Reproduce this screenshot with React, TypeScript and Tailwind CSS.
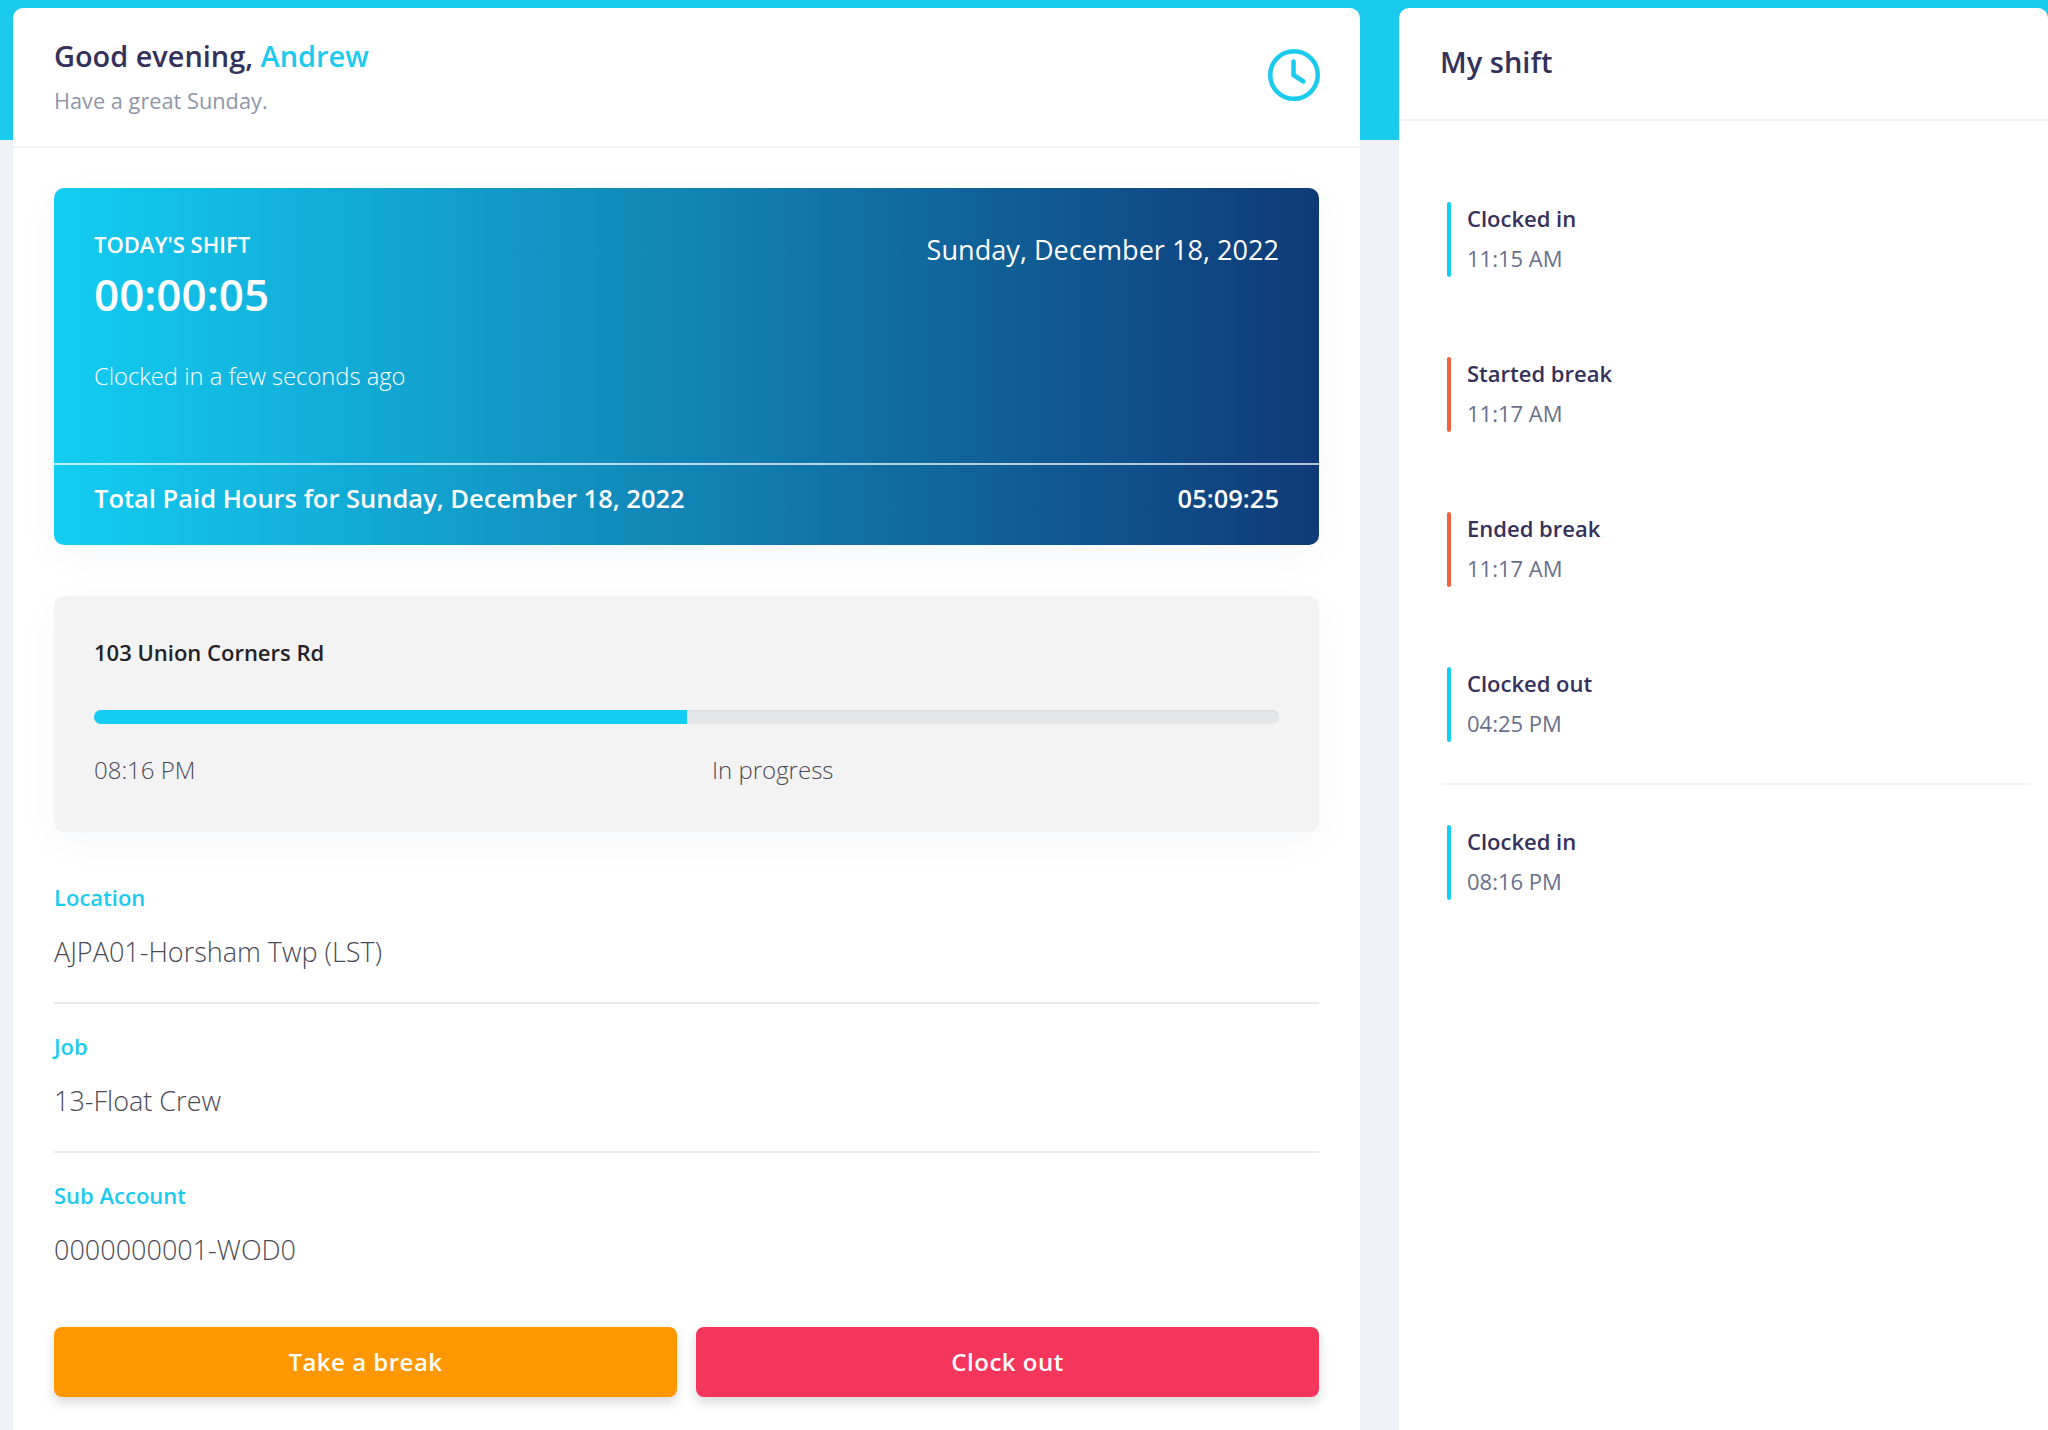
const shifts = [
  { label: "Clocked in", time: "11:15 AM", color: "bg-[#13cdf2]" },
  { label: "Started break", time: "11:17 AM", color: "bg-[#f4603c]" },
  { label: "Ended break", time: "11:17 AM", color: "bg-[#f4603c]" },
  { label: "Clocked out", time: "04:25 PM", color: "bg-[#13cdf2]" },
];

function ShiftItem({ label, time, color }: { label: string; time: string; color: string }) {
  return (
    <div className="flex h-[75px] gap-[16px] pl-[5px]">
      <div className={`w-[4px] rounded-full ${color}`} />
      <div className="flex flex-col pt-[0.5px]">
        <div className="text-[22px] leading-[30px] font-semibold text-[#34315c]">{label}</div>
        <div className="mt-[10px] text-[22px] leading-[30px] font-normal text-[#69708c]">{time}</div>
      </div>
    </div>
  );
}

function Field({ label, value, border }: { label: string; value: string; border?: boolean }) {
  return (
    <div className={`h-[149px] pt-[27px] ${border ? "border-b-2 border-[#e9e9e9]" : ""}`}>
      <div className="text-[22px] leading-[30px] font-semibold text-[#1bcbee]">{label}</div>
      <div className="mt-[20px] text-[27px] leading-[40px] font-light text-[#4a4a55]">{value}</div>
    </div>
  );
}

export default function App() {
  return (
    <div
      className="flex h-[1430px] items-stretch overflow-hidden bg-[linear-gradient(#1bcbee_140px,#f0f1f7_140px)] pt-[8px] pl-[13px]"
      style={{ fontFamily: '"Open Sans", sans-serif' }}
    >
      <main className="h-[1500px] w-[1347px] shrink-0 rounded-t-[10px] bg-white">
        <header className="flex h-[140px] items-start justify-between border-b-2 border-[#f2f3f6] pr-[40px] pl-[41px]">
          <div className="pt-[27px]">
            <h1 className="text-[28.9px] leading-[42px] font-semibold text-[#34315c]">
              Good evening, <span className="text-[#1bcbee]">Andrew</span>
            </h1>
            <p className="mt-[9px] text-[21.75px] leading-[30px] text-[#8f96a6]">Have a great Sunday.</p>
          </div>
          <svg className="mt-[41px]" width="52" height="52" viewBox="0 0 52 52" fill="none" stroke="#1bcbee" strokeLinecap="round" strokeLinejoin="round">
            <circle cx="26" cy="26" r="23.75" strokeWidth="4.5" />
            <path d="M25.5 12.5v13.5l10 6.5" strokeWidth="4.5" />
          </svg>
        </header>

        <div className="px-[41px] pt-[40px]">
          <section className="h-[357px] rounded-[10px] bg-[linear-gradient(90deg,#13cdf2_0%,#0f3a78_100%)] text-white shadow-[0_10px_40px_rgba(30,50,90,0.04)]">
            <div className="flex h-[277px] justify-between border-b-2 border-white/70 px-[40px]">
              <div className="pt-[41px]">
                <div className="text-[22px] leading-[30px] font-semibold">TODAY&apos;S SHIFT</div>
                <div className="mt-[4px] text-[44px] leading-[62px] font-semibold">00:00:05</div>
                <div className="mt-[34px] text-[23.75px] leading-[34px] font-light">Clocked in a few seconds ago</div>
              </div>
              <div className="pt-[42px] text-[27.1px] leading-[40px] font-normal">Sunday, December 18, 2022</div>
            </div>
            <div className="flex h-[80px] items-center justify-between px-[40px] pb-[14px] text-[25.5px] font-semibold">
              <span>Total Paid Hours for Sunday, December 18, 2022</span>
              <span>05:09:25</span>
            </div>
          </section>

          <section className="mt-[51px] h-[236px] rounded-[10px] bg-[#f3f3f3] px-[40px] pt-[39px] shadow-[0_10px_40px_rgba(30,50,90,0.04)]">
            <div className="text-[22px] leading-[34px] font-semibold text-[#222228]">103 Union Corners Rd</div>
            <div className="mt-[41px] flex h-[14px] overflow-hidden rounded-full bg-[#e4e7ea] shadow-[inset_0_1px_2px_rgba(0,0,0,0.08)]">
              <div className="w-1/2 bg-[#13cdf2]" />
            </div>
            <div className="mt-[29px] flex text-[24px] leading-[34px] font-light text-[#4a4a55]">
              <span className="w-[618px]">08:16 PM</span>
              <span>In progress</span>
            </div>
          </section>

          <div className="mt-[23px]">
            <Field label="Location" value="AJPA01-Horsham Twp (LST)" border />
            <Field label="Job" value="13-Float Crew" border />
            <Field label="Sub Account" value="0000000001-WOD0" />
          </div>

          <div className="mt-[25px] flex gap-[19px]">
            <button className="h-[70px] flex-1 rounded-[8px] bg-[#ff9800] text-[24px] font-semibold tracking-[0.5px] text-white shadow-[0_6px_12px_rgba(0,0,0,0.15)]">
              Take a break
            </button>
            <button className="h-[70px] flex-1 rounded-[8px] bg-[#f5365c] text-[24px] font-semibold tracking-[0.5px] text-white shadow-[0_6px_12px_rgba(0,0,0,0.15)]">
              Clock out
            </button>
          </div>
        </div>
      </main>

      <aside className="ml-[39px] h-[1500px] flex-1 rounded-t-[10px] bg-white">
        <header className="flex h-[113px] items-center border-b-2 border-[#f2f3f6] pb-[3px] pl-[41px] text-[29px] font-semibold text-[#34315c]">
          My shift
        </header>
        <div className="mr-[18px] ml-[43px] pt-[81px]">
          <div className="flex flex-col gap-[80px] border-b-2 border-[#f2f3f6] pb-[41px]">
            {shifts.map((s, i) => (
              <ShiftItem key={i} {...s} />
            ))}
          </div>
          <div className="pt-[40px]">
            <ShiftItem label="Clocked in" time="08:16 PM" color="bg-[#13cdf2]" />
          </div>
        </div>
      </aside>
    </div>
  );
}
